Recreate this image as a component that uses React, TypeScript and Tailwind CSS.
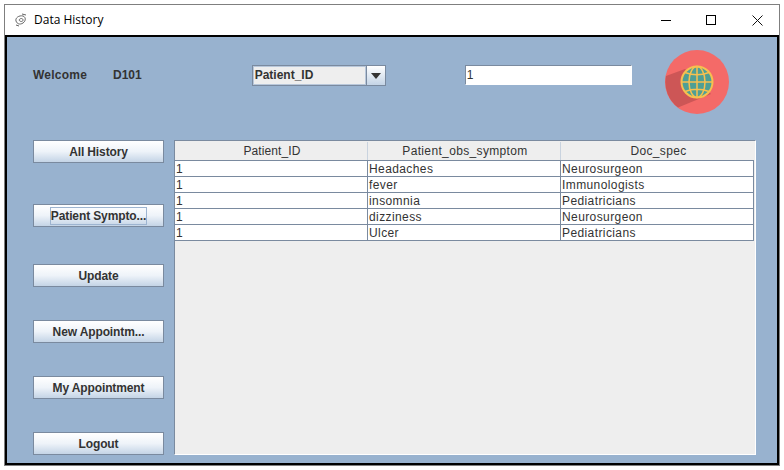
function Btn({ label, mt, focus }: { label: string; mt: string; focus?: boolean }) {
  return (
    <button className={`${mt} flex h-[23px] w-[131px] items-center justify-center border border-[#7a8a9f] bg-gradient-to-b from-[#ffffff] via-[#eef3f9] to-[#c4d4e6] text-[12px] font-bold tracking-[-0.12px] text-[#333333]`}>
      <span className={focus ? "border border-[#9db4d0] leading-[16px]" : "leading-[16px]"}>{label}</span>
    </button>
  );
}

const rows = [
  ["1", "Headaches", "Neurosurgeon"],
  ["1", "fever", "Immunologists"],
  ["1", "insomnia", "Pediatricians"],
  ["1", "dizziness", "Neurosurgeon"],
  ["1", "Ulcer", "Pediatricians"],
];

function Globe() {
  const lines = "#f7c04f";
  return (
    <svg width="64" height="64" viewBox="0 0 64 64">
      <circle cx="32" cy="32" r="32" fill="#f46a68" />
      <path d="M1 26L20 19L46 44L13 57.500A32 32 0 0 1 1 26Z" fill="#cd5656" />
      <circle cx="32" cy="32" r="15.500" fill="#4e9f95" stroke={lines} strokeWidth="2" />
      <ellipse cx="32" cy="32" rx="8" ry="15.500" fill="none" stroke={lines} strokeWidth="1.500" />
      <path d="M32 16.500V47.500M16.500 32H47.500M20 22.500Q32 27 44 22.500M20 41.500Q32 37 44 41.500" stroke={lines} strokeWidth="1.500" fill="none" />
    </svg>
  );
}

export default function App() {
  return (
    <div className="h-[470px] w-[784px] overflow-hidden bg-white pl-[4px] pt-[4px] font-['Liberation_Sans',Arial,sans-serif]">
      <div className="h-[462px] w-[776px] border border-[#7f7f7f] bg-white">
        <div className="flex h-[30px] items-center font-['Open_Sans','Noto_Sans',sans-serif] text-[12px] text-black">
          <svg width="14" height="14" viewBox="0 0 14 14" className="ml-[9px]" fill="none" stroke="#666" strokeWidth="1">
            <path d="M2 8C1 5 5 2 9 3C12 4 12 8 9 10C6 12 3 11 2 8Z" />
            <path d="M5 7C6 5 9 5 9 7C9 9 6 9 5 7Z" />
            <path d="M8 1L12 2M2 12L5 13" />
          </svg>
          <span className="ml-[6px]">Data History</span>
          <div className="ml-auto flex items-center">
            <span className="mr-[35px] block h-px w-[10px] bg-black" />
            <span className="mr-[36px] block h-[10px] w-[10px] border border-black" />
            <svg width="11" height="11" viewBox="0 0 11 11" className="mr-[16px]" stroke="#111" strokeWidth="1">
              <path d="M0.500 0.500L10.500 10.500M10.500 0.500L0.500 10.500" />
            </svg>
          </div>
        </div>
        <div className="h-[430px] w-full border-[2px] border-black bg-[#98b2cf]">
          <div className="flex h-[103px] items-start text-[#333333]">
            <span className="ml-[26px] mt-[30px] w-[80px] text-[12px] font-bold leading-[16px] tracking-[0.25px]">Welcome</span>
            <span className="mt-[30px] text-[12px] font-bold leading-[16px]">D101</span>
            <div className="ml-[110px] mt-[28px] flex h-[21px] w-[134px] border border-[#7a8a9f] bg-[#eeeeee]">
              <span className="flex-1 border border-[#b8c7da] pl-[1px] text-[12px] font-bold leading-[17px]">Patient_ID</span>
              <span className="flex w-[19px] items-center justify-center border-l border-[#7a8a9f] bg-gradient-to-b from-white to-[#c4d4e6]">
                <span className="block h-0 w-0 border-x-[5px] border-t-[6px] border-x-transparent border-t-[#333333]" />
              </span>
            </div>
            <div className="ml-[79px] mt-[28px] h-[20px] w-[167px] border border-[#7a8a9f] border-b-white border-r-white bg-white pl-px text-[12px] leading-[18px]">1</div>
            <div className="ml-[33px] mt-[13px]"><Globe /></div>
          </div>
          <div className="flex pl-[26px]">
            <div className="flex w-[131px] flex-col">
              <Btn label="All History" mt="mt-0" />
              <Btn label="Patient Sympto..." mt="mt-[41px]" focus />
              <Btn label="Update" mt="mt-[37px]" />
              <Btn label="New Appointm..." mt="mt-[33px]" />
              <Btn label="My Appointment" mt="mt-[33px]" />
              <Btn label="Logout" mt="mt-[33px]" />
            </div>
            <div className="ml-[10px] h-[315px] w-[582px] border border-[#7a8a9f] border-b-white border-r-white bg-[#eeeeee] pr-px">
              <div className="grid h-[19px] grid-cols-[193px_193px_193px] pt-px text-center text-[12px] leading-[18px] tracking-[0.35px] text-[#333333]">
                <div className="border-r border-[#c9d3df] pl-[2px] tracking-[0.1px]">Patient_ID</div>
                <div className="border-r border-[#c9d3df] pl-[2px]">Patient_obs_symptom</div>
                <div className="pl-[2px]">Doc_spec</div>
              </div>
              <div className="w-[579px] border-r border-t border-[#7a8a9f]">
                {rows.map((r, i) => (
                  <div key={i} className="grid h-[16px] grid-cols-[193px_193px_193px] border-b border-[#7a8a9f] bg-white text-[12px] leading-[14px] tracking-[0.4px] text-[#333333]">
                    {r.map((c, j) => (
                      <div key={j} className={j < 2 ? "border-r border-[#7a8a9f] pl-px pt-px" : "pl-px pt-px"}>{c}</div>
                    ))}
                  </div>
                ))}
              </div>
            </div>
          </div>
        </div>
      </div>
    </div>
  );
}
